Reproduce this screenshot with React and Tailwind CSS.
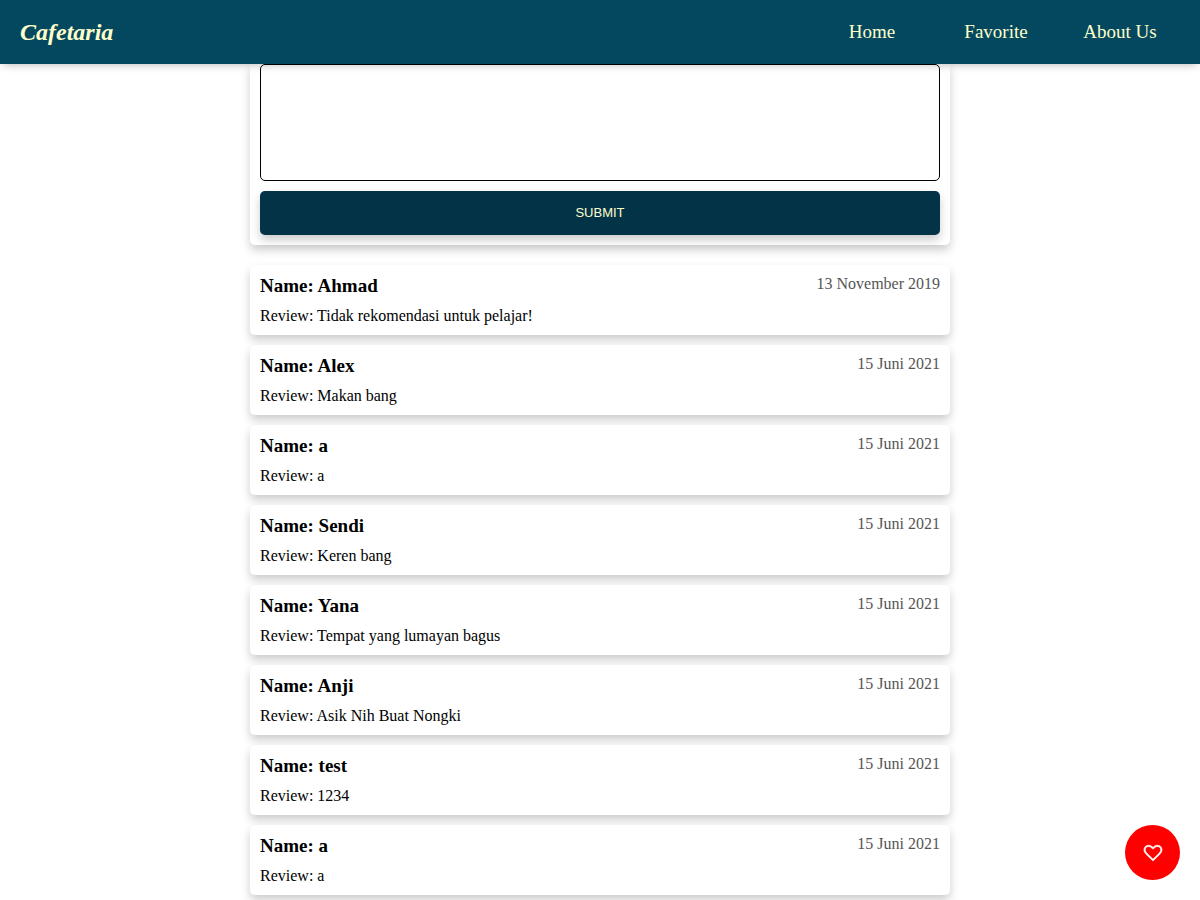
const reviews = [
  { name: "Ahmad", review: "Tidak rekomendasi untuk pelajar!", date: "13 November 2019" },
  { name: "Alex", review: "Makan bang", date: "15 Juni 2021" },
  { name: "a", review: "a", date: "15 Juni 2021" },
  { name: "Sendi", review: "Keren bang", date: "15 Juni 2021" },
  { name: "Yana", review: "Tempat yang lumayan bagus", date: "15 Juni 2021" },
  { name: "Anji", review: "Asik Nih Buat Nongki", date: "15 Juni 2021" },
  { name: "test", review: "1234", date: "15 Juni 2021" },
  { name: "a", review: "a", date: "15 Juni 2021" },
];

function Header() {
  return (
    <header className="sticky top-0 z-10 flex h-16 items-center justify-between bg-[#03485e] pl-5 pr-[18px] text-[#ffffcc] shadow-[0_4px_8px_-3px_rgba(0,0,0,0.25)]">
      <a href="#home" className="text-2xl font-bold italic">Cafetaria</a>
      <nav className="flex text-[19px] font-medium">
        <a href="#home" className="w-[124px] text-center">Home</a>
        <a href="#favorite" className="w-[124px] text-center">Favorite</a>
        <a href="#about" className="w-[124px] text-center">About Us</a>
      </nav>
    </header>
  );
}

function ReviewForm() {
  return (
    <form className="flex flex-col gap-2.5 rounded-b-[5px] bg-white px-2.5 pb-2.5 shadow-[0_5px_10px_rgba(0,0,0,0.2)]">
      <textarea aria-label="Review" className="block h-[117px] w-full resize-none rounded-[5px] border border-black p-2.5" />
      <button type="button" className="h-11 rounded-[5px] bg-[#023347] font-['Liberation_Sans',sans-serif] text-[13px] font-medium text-[#ffffcc] shadow-[0_5px_10px_rgba(0,0,0,0.2)]">
        SUBMIT
      </button>
    </form>
  );
}

function ReviewCard({ name, review, date }) {
  return (
    <li className="flex items-start justify-between rounded-[5px] bg-white p-2.5 shadow-[0_5px_10px_rgba(0,0,0,0.2)]">
      <div className="flex flex-col gap-2.5">
        <h3 className="text-[19px] leading-[22px] font-bold">Name: {name}</h3>
        <p className="text-base leading-[18px]">Review: {review}</p>
      </div>
      <time className="text-base leading-[18px] text-[#555555]">{date}</time>
    </li>
  );
}

function HeartIcon() {
  return (
    <svg viewBox="0 0 1792 1792" className="size-[18px]" fill="currentColor" stroke="currentColor" strokeWidth="70" overflow="visible" aria-hidden="true">
      <path d="M1664 596q0-81-21.5-143t-55-98.5-81.5-59.5-94-31-98-8-112 25.5-110.5 64-86.5 72-60 61.5q-18 22-49 22t-49-22q-24-28-60-61.5t-86.5-72-110.5-64-112-25.5-98 8-94 31-81.5 59.5-55 98.5-21.5 143q0 168 187 355l581 560 580-559q188-188 188-356zm128 0q0 221-229 450l-623 600q-18 18-44 18t-44-18l-624-602q-10-8-27.5-26t-55.5-65.5-68-97.5-53.5-121-23.5-138q0-220 127-344t351-124q62 0 126.5 21.5t120 58 95.5 68.5 76 68q36-36 76-68t95.5-68.5 120-58 126.5-21.5q224 0 351 124t127 344z" />
    </svg>
  );
}

export default function App() {
  return (
    <div className="bg-white font-['Liberation_Serif',serif] text-black">
      <Header />
      <main className="mx-auto flex max-w-[700px] flex-col gap-5 pb-[5px]">
        <ReviewForm />
        <ul className="flex flex-col gap-2.5">
          {reviews.map((item, index) => (
            <ReviewCard key={index} {...item} />
          ))}
        </ul>
      </main>
      <button type="button" aria-label="Add to favorites" className="fixed right-5 bottom-5 flex size-[55px] items-center justify-center rounded-full bg-[#ff0000] text-white">
        <HeartIcon />
      </button>
    </div>
  );
}
